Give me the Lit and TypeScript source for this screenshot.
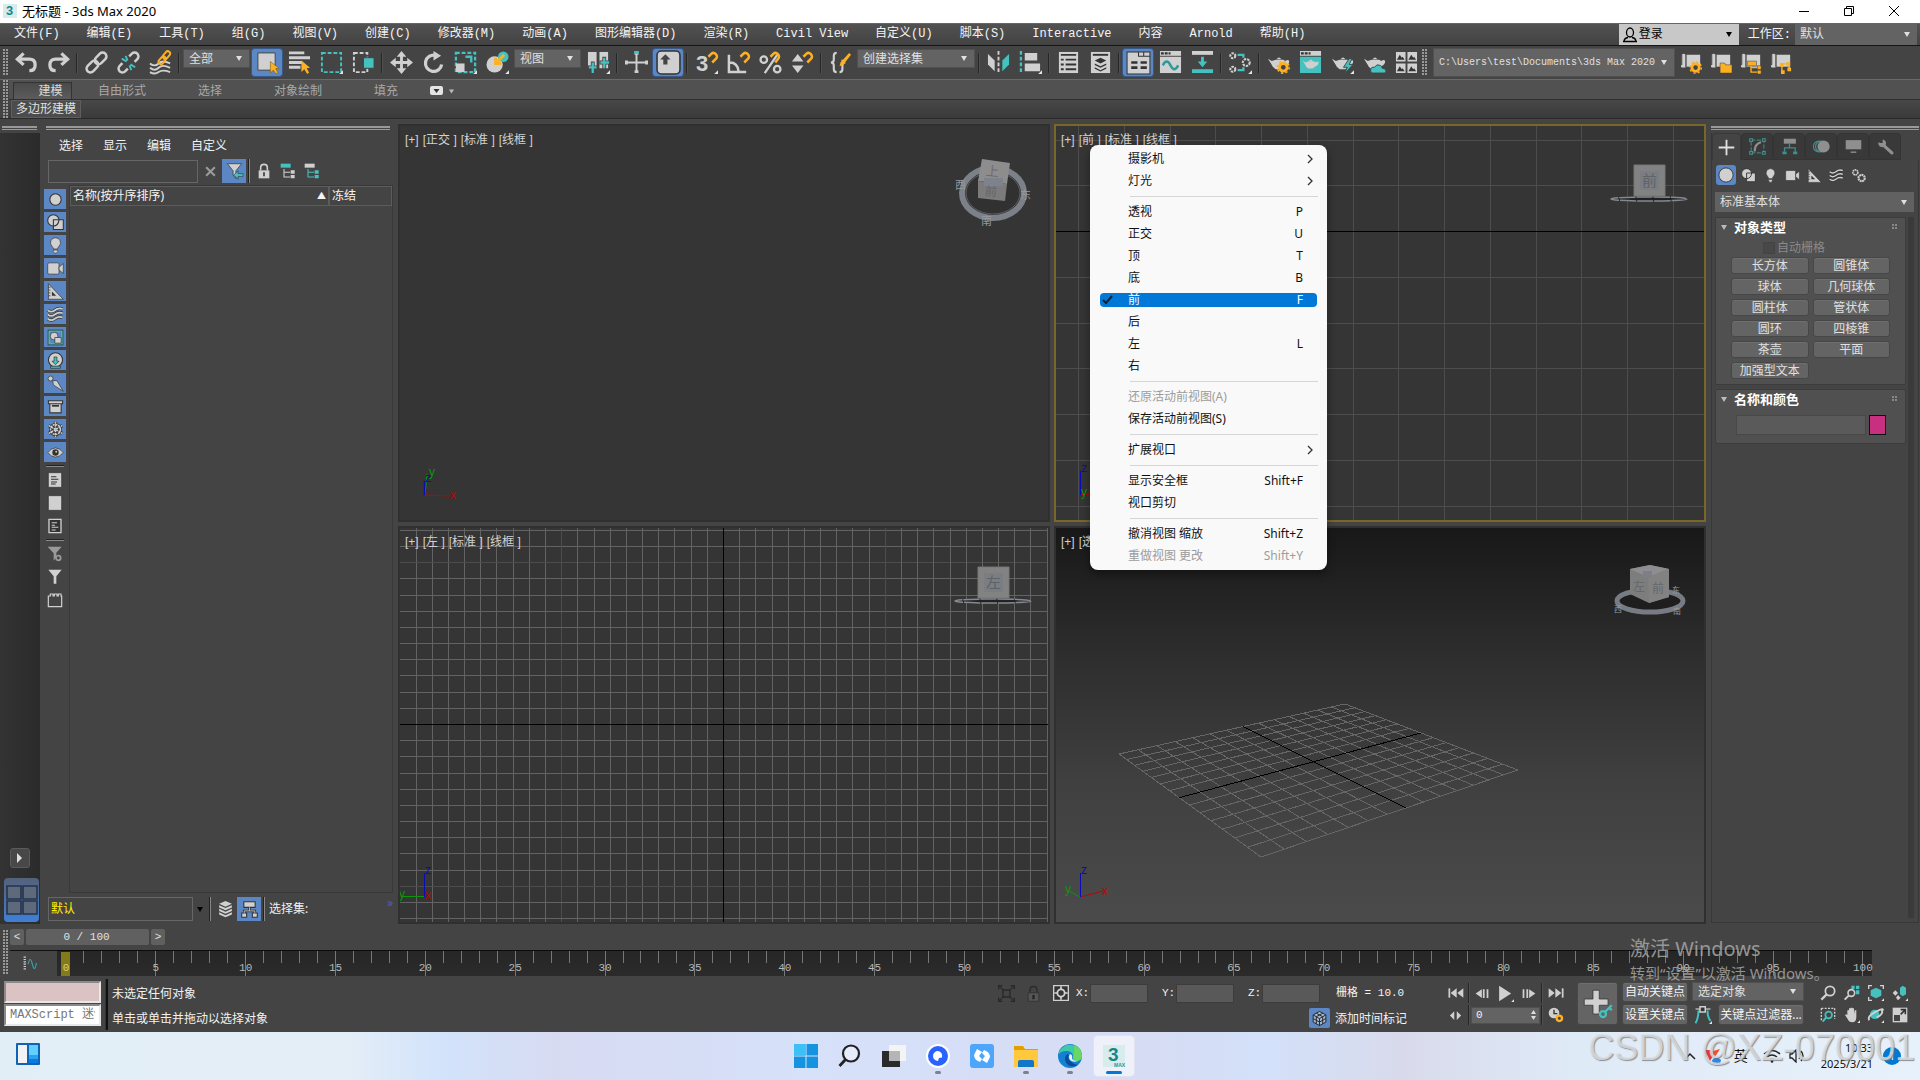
import { LitElement, html, css, svg, nothing, SVGTemplateResult } from "lit";
import { customElement, property } from "lit/decorators.js";
import { classMap } from "lit/directives/class-map.js";

const G = "#d0d0d0";
const T = "#45c1c0";
const O = "#fdb021";
const D = "#333333";

const more = svg`<path d="M24 20v4h-4z" fill="#e4e4e4"/>`;
const teapot = svg`<path d="M1 8l4 2.500 4-1.500h8l2 1.500c3-2 4.500-1 4 1.500-.6 2.500-3 3.600-5 4.500l-3 2.500h-6l-3-2.500c-1-2.500-3-5-5-8.500z" fill="${G}"/><path d="M10 8.500q2.500-3.500 5 0z" fill="${G}"/>`;
const scroll = svg`<path d="M2 3q2-2 4 0v14h-4q-2-1 0-3z" fill="${G}"/><path d="M7 3h15v13H7z" fill="${G}"/><path d="M2 14v-11M6.500 3v13" stroke="#555" fill="none"/>`;

/* All glyphs share a 24 x 24 box. */
const ICONS: Record<string, SVGTemplateResult> = {
  undo: svg`<path d="M9 2.500L2.500 8.500 9 14.500M3 8.500h12q6 0 6 6t-6 6" fill="none" stroke="${G}" stroke-width="3.400"/>`,
  redo: svg`<path d="M15 2.500l6.500 6-6.500 6M21 8.500H9q-6 0-6 6t6 6" fill="none" stroke="${G}" stroke-width="3.400"/>`,
  link: svg`<g fill="none" stroke="${G}" stroke-width="2.600" transform="rotate(-45 12 12)"><rect x="-1" y="8" width="14" height="8" rx="4"/><rect x="11" y="8" width="14" height="8" rx="4"/></g>`,
  unlink: svg`<g fill="none" stroke="${G}" stroke-width="2.600" transform="rotate(-45 12 12)"><path d="M7 8H3a4 4 0 0 0 0 8h4M17 8h4a4 4 0 0 1 0 8h-4"/></g><path d="M5 8l5 3M9 5l2 5M14 14l5 3M13 15l2 5" stroke="${T}" stroke-width="2"/>`,
  bind: svg`<path d="M1 13q5 4 9 0t12 0M1 17.500q5 4 9 0t12 0M1 22q5 3 9 0t12 0" fill="none" stroke="${G}" stroke-width="2"/><g fill="none" stroke="${O}" stroke-width="2" transform="rotate(-50 16 7)"><rect x="8" y="4.500" width="9" height="5" rx="2.500"/><rect x="15" y="4.500" width="9" height="5" rx="2.500"/></g>`,
  pick: svg`<path d="M2 2h18v18H2z" fill="${G}" stroke="#444"/><path d="M15 11v12l3-3 3 4 2-1.500-2.500-4 3.500-.5z" fill="${O}" stroke="#7a5a10" stroke-width=".6"/>`,
  pickName: svg`<path d="M1 2h16M1 7h22M1 12h14M1 17h12" stroke="${G}" stroke-width="3"/><path d="M14 10v12l3-3 3 5 2-1.500-2.500-4.500 3.500-.5z" fill="${O}"/>`,
  rect: svg`<path d="M2 2h20v20H2z" fill="none" stroke="${T}" stroke-width="2" stroke-dasharray="4 2"/>${more}`,
  cross: svg`<path d="M2 2h14v20H2z" fill="none" stroke="${G}" stroke-width="2" stroke-dasharray="4 2"/><path d="M12 7h11v11H12z" fill="${T}" stroke="#444"/>`,
  move: svg`<path d="M12 0l5 6h-3.500v4.500H18V7l6 5-6 5v-3.500h-4.500V18H17l-5 6-5-6h3.500v-4.500H6V17l-6-5 6-5v3.500h4.500V6H7z" fill="${G}"/>`,
  rotate: svg`<path d="M14 4.500A8.500 8.500 0 1 0 20.500 14" fill="none" stroke="${G}" stroke-width="3.400"/><path d="M12 0l8 5-8 5z" fill="${G}"/>`,
  scale: svg`<path d="M2 2h20v20H2z" fill="none" stroke="${T}" stroke-width="2.400" stroke-dasharray="4 2"/><path d="M2 13h9v9H2z" fill="${G}"/><path d="M12 6h6v6" fill="none" stroke="${T}" stroke-width="2.500"/>${more}`,
  place: svg`<circle cx="9" cy="14" r="8.500" fill="${G}"/><circle cx="18" cy="6" r="5.500" fill="${T}"/><path d="M19 4l-7 7M10 7v6h6" fill="none" stroke="${O}" stroke-width="3"/>${more}`,
  pivot: svg`<path d="M1 1h9v17H1z" fill="${G}"/><path d="M13 1h9v17h-9z" fill="${G}"/><path d="M6 11v13M1 17h10M18 6v13M13 12h11" stroke="#444" stroke-width="4"/><path d="M6 12v11M2 17h8M18 7v11M14 12h9" stroke="${T}" stroke-width="2.400"/>${more}`,
  manip: svg`<path d="M12 2v20M1 12h22" stroke="${G}" stroke-width="2"/><path d="M10 1h4v3h-4zM10 20h4v3h-4zM0 10h3v4H0zM21 10h3v4h-3z" fill="${G}"/><path d="M9.500 0h5v3h-5z" fill="${T}"/>`,
  override: svg`<rect x="1" y="1" width="22" height="22" rx="4" fill="${G}" stroke="#333" stroke-width="1.500"/><path d="M9 4l5 5h-3v5H7V9H4z" fill="#444"/>`,
  snap: svg`<text x="1" y="21" font-size="23" font-weight="700" font-family="Liberation Sans" fill="${G}">3</text><path d="M14 6l3-3c3-3 8 2 5 5l-4 4" fill="none" stroke="${O}" stroke-width="2.600"/>${more}`,
  angle: svg`<path d="M2 4v18h18M3 12q8 0 9 9" fill="none" stroke="${G}" stroke-width="2.600"/><path d="M14 6l3-3c3-3 8 2 5 5l-4 4" fill="none" stroke="${O}" stroke-width="2.600"/>`,
  percent: svg`<path d="M19 4L6 23" stroke="${G}" stroke-width="2.400"/><circle cx="5" cy="9" r="3.400" fill="none" stroke="${G}" stroke-width="2.400"/><circle cx="19" cy="19" r="3.400" fill="none" stroke="${G}" stroke-width="2.400"/><path d="M12 6l3-3c3-3 8 2 5 5l-3 4" fill="none" stroke="${O}" stroke-width="2.600"/>`,
  spin: svg`<path d="M1 11l6-8 6 8zM1 15h12l-6 8z" fill="${G}"/><path d="M13 6l3-3c3-3 8 2 5 5l-4 4" fill="none" stroke="${O}" stroke-width="2.600"/>`,
  braces: svg`<path d="M8 2Q5 2 5 5v4q0 3-3 3 3 0 3 3v4q0 3 3 3M11 22q3 0 3-3v-4q0-3 3-3-3 0-3-3" fill="none" stroke="${G}" stroke-width="2.200"/><path d="M21 2l-9 10-1 4 4-2 8-10z" fill="${O}"/>`,
  mirror: svg`<path d="M1 3l7 7v11l-7-7z" fill="${G}"/><path d="M23 3l-7 7v11l7-7z" fill="${T}"/><path d="M12 0v24" stroke="${G}" stroke-width="2" stroke-dasharray="4 2"/>`,
  align: svg`<path d="M2 0v24" stroke="${T}" stroke-width="2.400" stroke-dasharray="4 2"/><path d="M6 2h13v8H6zM6 13h16v8H6z" fill="${G}"/>${more}`,
  layers1: svg`<path d="M2 1h20v22H2z" fill="${G}"/><path d="M4 4h16M4 9h3M9 9h11M4 14h3M9 14h11M4 19h3M9 19h11" stroke="${D}" stroke-width="2"/>`,
  layers2: svg`<path d="M2 1h20v22H2z" fill="${G}"/><path d="M4 4h16" stroke="${D}" stroke-width="2"/><path d="M12 7l6 3-6 3-6-3zM6 13l6 3 6-3v1.500l-6 3-6-3zM6 17l6 3 6-3v1.500l-6 3-6-3z" fill="${D}"/>`,
  ribbon: svg`<path d="M1 2h22v21H1z" fill="${G}" stroke="${D}"/><path d="M12 2v4h11M17 2v4" fill="none" stroke="${D}"/><path d="M5 12h6M14 12h6M5 17h6M14 17h6" stroke="${D}" stroke-width="2.600"/>`,
  curve: svg`<path d="M1 0h22v5H1z" fill="${G}"/><path d="M2 2.500h10" stroke="${D}" stroke-width="2.500" stroke-dasharray="3 1"/><path d="M1 6h22v17H1z" fill="${G}"/><path d="M4 15q4-8 8 0t8 0" fill="none" stroke="#2a9a9a" stroke-width="2.500"/>`,
  schem: svg`<path d="M1 0h22v4H1z" fill="${G}"/><path d="M1 19h22v4H1z" fill="${T}"/><path d="M10.500 6h3v5H17l-5 6-5-6h3.500z" fill="${T}"/>`,
  material: svg`<g fill="#444" stroke="${G}" stroke-width="2.200" stroke-dasharray="2.500 1"><circle cx="4" cy="5" r="2.600"/><circle cx="4" cy="19" r="2.600"/><circle cx="18" cy="12" r="3.600"/></g><path d="M9 4h6v3M9 20h6v-3" fill="none" stroke="${T}" stroke-width="2.400"/>${more}`,
  rsetup: svg`${teapot}<circle cx="17" cy="17" r="4" fill="#444" stroke="${O}" stroke-width="3"/><circle cx="17" cy="17" r="6.200" fill="none" stroke="${O}" stroke-width="1.600" stroke-dasharray="2.400 2.400"/>`,
  rframe: svg`<path d="M1 0h22v5H1z" fill="${G}"/><path d="M2 2.500h10" stroke="${D}" stroke-width="2.500" stroke-dasharray="3 1"/><path d="M1 6h22v17H1z" fill="${T}"/><g transform="translate(3 4) scale(.75)">${teapot}</g>`,
  rprod: svg`${teapot}<path d="M19 8l-6 9h4l-3 7 9-10h-4l3-6z" fill="${T}" stroke="#444"/>${more}`,
  rcloud: svg`${teapot}<path d="M10 23q-3-1-2-4t4-2q2-4 6-2 2 1 2 3 4 0 4 3 0 2-2 2z" fill="${T}" stroke="#444"/>`,
  gallery: svg`<path d="M1 1h10v10H1zM13 1h10v10H13zM1 13h10v10H1zM13 13h10v10H13z" fill="${G}"/><path d="M2 9l3-5 2 3 1-1 2 3zM14 9l3-5 2 3 1-1 2 3zM2 21l3-5 2 3 1-1 2 3zM14 21l3-5 2 3 1-1 2 3z" fill="${D}"/>`,
  pgear: svg`${scroll}<circle cx="17" cy="17" r="4" fill="#444" stroke="${O}" stroke-width="3"/><circle cx="17" cy="17" r="6.200" fill="none" stroke="${O}" stroke-width="1.600" stroke-dasharray="2.400 2.400"/>`,
  pfolder: svg`${scroll}<path d="M11 12h5l1 2h7v9H11z" fill="${O}" stroke="#444" stroke-width=".6"/>`,
  ptree: svg`${scroll}<path d="M8 10h10v5H8zM19 15h4v4h-4zM19 20h4v4h-4z" fill="${O}" stroke="#444" stroke-width=".6"/><path d="M12 15v7h7M12 17h7" fill="none" stroke="${O}" stroke-width="1.500"/>`,
  pnodes: svg`${scroll}<path d="M11 12h4v4h-4zM18 11h4v4h-4zM12 20h4v4h-4zM19 17h4v4h-4z" fill="${O}"/><path d="M13 14v8M13 13h8v6" fill="none" stroke="${O}" stroke-width="1.500"/>`,
  circle: svg`<circle cx="12" cy="12" r="8" fill="${G}" stroke="${D}" stroke-width="1.500"/>`,
  sphere: svg`<circle cx="12" cy="12" r="9.500" fill="${G}" stroke="${D}" stroke-width="1.200"/>`,
  shapes: svg`<circle cx="9" cy="9" r="8" fill="${G}" stroke="${D}" stroke-width="1.500"/><path d="M9 8h14v14H9z" fill="${G}" stroke="${D}" stroke-width="1.500"/><path d="M9 17q7 0 8-9" fill="none" stroke="${D}" stroke-width="1.500"/>`,
  bulb: svg`<path d="M12 1a7 7 0 0 1 5 12q-2 2-2 4H9q0-2-2-4a7 7 0 0 1 5-12z" fill="${G}" stroke="${D}"/><path d="M9 18.500h6v2l-2 2.500h-2l-2-2.500z" fill="${G}" stroke="${D}" stroke-width=".8"/>`,
  camera: svg`<rect x="1" y="4" width="16" height="16" rx="2" fill="${G}" stroke="${D}"/><path d="M17 10l6-5v14l-6-5z" fill="${G}" stroke="${D}"/>`,
  helper: svg`<path d="M2 1v22h21z" fill="${G}" stroke="${D}"/><path d="M7 12v6h6z" fill="${D}"/><path d="M2 6h3M2 10h3M2 14h3M2 18h3" stroke="${D}"/>`,
  waves: svg`<path d="M1 6q5 4 10 0t11-2M1 12q5 4 10 0t11-2M1 18q5 4 10 0t11-2" fill="none" stroke="${D}" stroke-width="4.600"/><path d="M1 6q5 4 10 0t11-2M1 12q5 4 10 0t11-2M1 18q5 4 10 0t11-2" fill="none" stroke="${G}" stroke-width="2.400"/>`,
  group: svg`<path d="M1 1h22v22H1z" fill="${D}"/><path d="M3 3h18v18H3z" fill="#5b87c4" stroke="${T}" stroke-width="2"/><circle cx="10" cy="10" r="5.500" fill="${G}" stroke="${D}"/><path d="M11 12h9v8h-9z" fill="${G}" stroke="${D}"/>`,
  xref: svg`<circle cx="12" cy="11" r="10" fill="${G}" stroke="${D}" stroke-width="1.500"/><path d="M10 7h4v6h3l-5 5-5-5h3z" fill="${T}" stroke="${D}"/><path d="M5 20h14v3H5z" fill="${T}" stroke="${D}"/>`,
  bone: svg`<circle cx="5" cy="5" r="3.500" fill="${G}" stroke="${D}"/><path d="M8 8l6 0 9 15L9 14z" fill="${G}" stroke="${D}"/>`,
  box: svg`<path d="M2 4h20v4H2zM4 8h16v13H4z" fill="${G}" stroke="${D}" stroke-width="1.500"/><path d="M7 11h10" stroke="${D}" stroke-width="2.500"/>`,
  snow: svg`<g stroke="${D}" stroke-width="4.500" fill="none"><path d="M12 1v22M2.500 6.500l19 11M2.500 17.500l19-11"/><circle cx="12" cy="12" r="7"/></g><g stroke="${G}" stroke-width="2.200" fill="none" stroke-dasharray="3 1"><path d="M12 1v22M2.500 6.500l19 11M2.500 17.500l19-11"/><circle cx="12" cy="12" r="7"/></g>`,
  eye: svg`<path d="M1 12q11-13 22 0-11 13-22 0z" fill="${G}" stroke="${D}"/><circle cx="12" cy="12" r="4.500" fill="${D}"/><circle cx="13" cy="11" r="1.300" fill="${G}"/>`,
  doc: svg`<path d="M2 1h20v22H2z" fill="${G}" stroke="#2c2c2c"/><path d="M6 7h8M6 11h11M6 15h9M6 18h7" stroke="${D}" stroke-width="1.600"/>`,
  blank: svg`<path d="M2 1h20v22H2z" fill="${G}" stroke="#2c2c2c"/>`,
  docd: svg`<path d="M3 2h18v20H3z" fill="#333" stroke="${G}" stroke-width="2"/><path d="M7 7h8M7 11h5M7 14h10M7 18h6" stroke="${G}" stroke-width="1.600"/>`,
  funnelGear: svg`<path d="M1 1h21l-8 9v6l-4 6V11z" fill="#9a9a9a"/><circle cx="17" cy="18" r="3.500" fill="#444" stroke="#9a9a9a" stroke-width="2.600"/>`,
  funnel: svg`<path d="M2 1h20l-8 10v11h-4V11z" fill="${G}"/>`,
  brick: svg`<path d="M2 6h3V3h4v3h2V3h4v3h2V3h4v3h1v16H2z" fill="none" stroke="${G}" stroke-width="1.800"/>`,
  funnelArrow: svg`<path d="M2 1h20l-8 10v11l-4-5v-6z" fill="${G}" stroke="#333"/><path d="M24 15h-7v-4l-6 6 6 6v-4h7z" fill="${T}" stroke="#333" stroke-width=".8"/>`,
  xmark: svg`<path d="M4 4l16 16M20 4L4 20" stroke="#9a9a9a" stroke-width="4"/>`,
  lock: svg`<path d="M7 11V7q0-5 5-5t5 5v4" fill="none" stroke="${G}" stroke-width="2.400"/><path d="M4 11h16v12H4z" fill="${G}"/><path d="M12 14v6" stroke="#333" stroke-width="2.400"/>`,
  lockDim: svg`<path d="M7 11V7q0-5 5-5t5 5v4" fill="none" stroke="#2c2c2c" stroke-width="2"/><path d="M4.500 11h15v12h-15z" fill="#555" stroke="#2c2c2c"/><path d="M12 14v6" stroke="#222" stroke-width="3"/>`,
  tree1: svg`<path d="M1 1h15v6H1z" fill="${T}"/><path d="M6 9v12h9M6 14h9" fill="none" stroke="${G}" stroke-width="1.600"/><path d="M16 11h6v5h-6zM16 18h6v5h-6z" fill="${G}"/>`,
  tree2: svg`<path d="M1 1h15v6H1z" fill="${G}"/><path d="M6 9v12h9M6 14h9" fill="none" stroke="${T}" stroke-width="1.600"/><path d="M16 11h6v5h-6zM16 18h6v5h-6z" fill="${T}"/>`,
  stack: svg`<path d="M12 0l9 4-9 4-9-4z" fill="${G}"/><path d="M3 6l9 4 9-4v3l-9 4-9-4zM3 11l9 4 9-4v3l-9 4-9-4zM3 16l9 4 9-4v3l-9 4-9-4z" fill="${G}"/>`,
  hier: svg`<path d="M12 9v5M4.500 17v-3h15v3" fill="none" stroke="${D}" stroke-width="3.500"/><path d="M4 1h16v8H4zM1 17h7v6H1zM16 17h7v6h-7z" fill="${G}" stroke="${D}" stroke-width="1.500"/><path d="M12 9v5M4.500 17v-3h15v3" fill="none" stroke="${G}" stroke-width="1.200"/>`,
  plus: svg`<path d="M12 1v22M1 12h22" stroke="#e0e0e0" stroke-width="2.600"/>`,
  modify: svg`<path d="M3 3h18v18H3z" fill="none" stroke="#3f8f8f" stroke-width="1.400" stroke-dasharray="6 2"/><path d="M1 1h4v4H1zM19 1h4v4h-4zM1 19h4v4H1zM19 19h4v4h-4z" fill="#444" stroke="#3f8f8f" stroke-width="1.500"/><path d="M8 19q0-11 9-13" fill="none" stroke="#8f8f8f" stroke-width="3"/>`,
  hierTab: svg`<path d="M4 1h17v7H4z" fill="#8f8f8f"/><path d="M12 8v6M5 19v-5h15v5" fill="none" stroke="#3f8f8f" stroke-width="1.800"/><path d="M2 19h6v4H2zM17 19h6v4h-6z" fill="#3f8f8f"/>`,
  motion: svg`<circle cx="8" cy="12" r="7.500" fill="none" stroke="#3f8f8f" stroke-width="1.600"/><circle cx="11" cy="12" r="7.500" fill="#444" stroke="#3f8f8f" stroke-width="1.600"/><circle cx="15" cy="12" r="8.500" fill="#8f8f8f"/>`,
  display: svg`<path d="M1 3h22v13H1z" fill="#8f8f8f"/><path d="M8 20h8" stroke="#8f8f8f" stroke-width="2"/>`,
  wrench: svg`<path d="M9 10l12 11" stroke="#8f8f8f" stroke-width="4.600" stroke-linecap="round"/><path d="M2 6a5.500 5.500 0 1 0 6-4v5H5z" fill="#8f8f8f"/>`,
  gears: svg`<circle cx="7" cy="7" r="4" fill="none" stroke="${G}" stroke-width="2.600" stroke-dasharray="2.600 .8"/><circle cx="17" cy="16" r="5" fill="none" stroke="${G}" stroke-width="3.400" stroke-dasharray="3 .8"/>`,
  trackIcon: svg`<path d="M3 1v22" stroke="${G}" stroke-width="4" stroke-dasharray="2 2"/><path d="M9 14q3-16 7 0t7-2" fill="none" stroke="#3fa0a0" stroke-width="2"/>`,
  isolate: svg`<path d="M1 6V1h5M18 1h5v5M23 18v5h-5M6 23H1v-5M7 7h10v10H7z" fill="none" stroke="#282828" stroke-width="2"/><path d="M3 3l4 4M21 3l-4 4M3 21l4-4M21 21l-4-4" stroke="#282828" stroke-width="1.500"/>`,
  absolute: svg`<path d="M1 1h22v22H1z" fill="${D}" stroke="${G}" stroke-width="2"/><path d="M12 2v20M2 12h20" stroke="${G}" stroke-width="2.600"/><circle cx="12" cy="12" r="5.500" fill="${D}" stroke="${G}" stroke-width="2.800"/>`,
  cube: svg`<path d="M12 2l9 5v10l-9 5-9-5V7z" fill="#c8cdd6aa"/><path d="M12 2l9 5v10l-9 5-9-5V7zM3 7l9 5 9-5M12 12v10M7.500 4.500l9 5v10M16.500 4.500l-9 5v10M3 12l9 5 9-5" fill="none" stroke="#2a2a2a" stroke-width="1.400"/>`,
  first: svg`<path d="M2 5v14" stroke="${G}" stroke-width="2.600"/><path d="M13 5v14l-9-7zM23 5v14l-9-7z" fill="${G}"/>`,
  prev: svg`<path d="M11 5v14L1 12z" fill="${G}"/><path d="M14 5v14M20 5v14" stroke="${G}" stroke-width="2.800"/>`,
  play: svg`<path d="M3 1l17 11L3 23z" fill="${G}"/>${more}`,
  next: svg`<path d="M13 5v14l10-7z" fill="${G}"/><path d="M4 5v14M10 5v14" stroke="${G}" stroke-width="2.800"/>`,
  last: svg`<path d="M22 5v14" stroke="${G}" stroke-width="2.600"/><path d="M1 5v14l9-7zM11 5v14l9-7z" fill="${G}"/>`,
  keys: svg`<path d="M10 5v14l-7-7zM14 5v14l7-7z" fill="${G}"/>`,
  clock: svg`<circle cx="9" cy="9" r="8" fill="${G}"/><path d="M9 4v6h5" fill="none" stroke="#333" stroke-width="2"/><circle cx="17" cy="17" r="4" fill="#444" stroke="${O}" stroke-width="3.500"/>`,
  bigKey: svg`<path d="M8 1h5v7h7v5h-7v7H8v-7H1V8h7z" fill="${G}" stroke="#333" stroke-width=".6"/><path d="M23 13l-6 6M21 15l2 2" stroke="${T}" stroke-width="1.800"/><circle cx="16" cy="20" r="2.400" fill="none" stroke="${T}" stroke-width="1.800"/>`,
  tangent: svg`<path d="M2 23Q6 16 6 6M22 20q-4-5-4-14" fill="none" stroke="${T}" stroke-width="2.600"/><path d="M2 4h20" stroke="${G}" stroke-width="1.500"/><path d="M8 1h7v7H8z" fill="#333" stroke="${G}" stroke-width="2"/>${more}`,
  zoom: svg`<circle cx="15" cy="9" r="7" fill="none" stroke="${G}" stroke-width="2.600"/><path d="M10 14l-8 8" stroke="${G}" stroke-width="3.400"/>`,
  zoomAll: svg`<path d="M11 1h5v5h-5zM18 1h5v5h-5zM18 8h5v6h-5z" fill="${T}"/><circle cx="11" cy="12" r="5" fill="#444" stroke="${G}" stroke-width="2.400"/><path d="M7 16l-6 6" stroke="${G}" stroke-width="3"/>`,
  extents: svg`<path d="M1 6V1h5M18 1h5v5M6 23H1v-5" fill="none" stroke="${G}" stroke-width="2"/><path d="M12 4l8 4v8l-8 4-8-4V8z" fill="${T}"/>${more}`,
  extentsAll: svg`<path d="M12 4l4-3 5 3v10l-5 3-4-3z" fill="${T}"/><path d="M5 8l4 4-4 4-4-4zM9 15l4 4-4 4-3-4z" fill="${G}"/>${more}`,
  region: svg`<path d="M2 2h20v16" fill="none" stroke="${G}" stroke-width="2" stroke-dasharray="3 2"/><path d="M2 2v18" stroke="${G}" stroke-width="2" stroke-dasharray="3 2"/><circle cx="13" cy="12" r="5" fill="#444" stroke="${T}" stroke-width="2.600"/><path d="M9 16l-5 6" stroke="${T}" stroke-width="3"/>`,
  hand: svg`<path d="M5 12V5h2.500v6V2H10v8V1h2.600v9V2H15v9l1-6h2.500v10q0 8-6 8-5 0-7-5l-4-6 2-1z" fill="${G}"/>${more}`,
  orbit: svg`<circle cx="10" cy="11" r="7" fill="${T}"/><path d="M2 20Q-2 14 12 7T21 6q2 4-8 10" fill="none" stroke="${G}" stroke-width="2.800"/>${more}`,
  maximize: svg`<path d="M1 1h22v22H1z" fill="${G}"/><path d="M3 12h9v9H3z" fill="#444"/><path d="M13 11l6-6M13 4h7v7" fill="none" stroke="#333" stroke-width="2.400"/>`,
};

const icon = (name: string, size = 24) =>
  html`<svg class="ic" viewBox="0 0 24 24" width=${size} height=${size} aria-hidden="true">${ICONS[name]}</svg>`;

const shared = css`
  * { box-sizing: border-box; }
  button, input, select {
    font: inherit; color: inherit; background: none; border: 0; padding: 0; margin: 0; border-radius: 0; outline: 0; min-width: 0;
  }
  button { display: inline-flex; align-items: center; justify-content: center; white-space: nowrap; }
  .ic { display: block; flex: none; overflow: visible; }
`;

type Pt = [number, number];

/* Projects the unit square onto an arbitrary quad (a, b, c, d clockwise). */
function quadMap(a: Pt, b: Pt, c: Pt, d: Pt) {
  const sx = a[0] - b[0] + c[0] - d[0];
  const sy = a[1] - b[1] + c[1] - d[1];
  const dx1 = b[0] - c[0], dx2 = d[0] - c[0], dy1 = b[1] - c[1], dy2 = d[1] - c[1];
  const den = dx1 * dy2 - dx2 * dy1;
  const g = (sx * dy2 - dx2 * sy) / den;
  const h = (dx1 * sy - sx * dy1) / den;
  return (u: number, v: number): Pt => {
    const w = g * u + h * v + 1;
    return [
      ((b[0] - a[0] + g * b[0]) * u + (d[0] - a[0] + h * d[0]) * v + a[0]) / w,
      ((b[1] - a[1] + g * b[1]) * u + (d[1] - a[1] + h * d[1]) * v + a[1]) / w,
    ];
  };
}

const line = (p: Pt, q: Pt, cls: string) =>
  svg`<line class=${cls} x1=${p[0]} y1=${p[1]} x2=${q[0]} y2=${q[1]}></line>`;

@customElement("max-viewport")
class MaxViewport extends LitElement {
  @property() view = "";
  @property() kind: "ortho" | "front" | "left" | "persp" = "ortho";

  static styles = [shared, css`
    :host { display: grid; min-width: 0; min-height: 0; border: 2px solid #303030; background: #353535; overflow: hidden; }
    :host([kind="front"]) { border-color: #7a6628; }
    :host([kind="persp"]) { background: linear-gradient(#181818, #2c2c2c 30%, #404040 65%, #4b4b4b); }
    .scene, .bar, .cube, .axes { grid-area: 1 / 1; }
    .scene { width: 100%; height: 100%; min-height: 0; display: block; }
    .minor { stroke: #636363; } .dim { stroke: #4d4d4d; } .axis { stroke: #000; }
    .mesh { stroke: #666; }
    .bar { display: flex; gap: 4px; align-self: start; padding: 7px 5px; font: 12px/14px "Liberation Sans", "Noto Sans CJK SC", sans-serif; color: #d2d2d2; }
    .cube { justify-self: end; align-self: start; margin: 24px 8px 0 0; overflow: visible; }
    .axes { justify-self: start; align-self: end; overflow: visible; margin: 0 0 -2px -2px; }
    text { font-family: "Liberation Sans", "Noto Sans CJK SC", sans-serif; }
  `];

  private flat(step: number, cx: number, cy: number, cls: string, upright: string) {
    const out: unknown[] = [];
    for (let i = -60; i <= 60; i++) {
      const x = Math.round(cx + i * step) + 0.5;
      const y = Math.round(cy + i * step) + 0.5;
      const c = Math.abs(i) === 10 ? "dim" : cls;
      if (i === 0) continue;
      if (x > 0) out.push(svg`<line class=${c} x1=${x} x2=${x} y1="0" y2="100%"></line>`);
      if (y > 0) out.push(svg`<line class=${c} y1=${y} y2=${y} x1="0" x2="100%"></line>`);
    }
    out.push(svg`<line class=${upright} x1=${cx + 0.5} x2=${cx + 0.5} y1="0" y2="100%"></line>`);
    out.push(svg`<line class="axis" y1=${cy + 0.5} y2=${cy + 0.5} x1="0" x2="100%"></line>`);
    return out;
  }

  private mesh() {
    const f = quadMap([63, 226], [289, 176], [462, 242], [205, 329]);
    const out: unknown[] = [];
    for (let i = 0; i <= 14; i++) {
      if (i === 7) continue;
      out.push(line(f(i / 14, 0), f(i / 14, 1), "mesh"), line(f(0, i / 14), f(1, i / 14), "mesh"));
    }
    out.push(line(f(0.5, 0), f(0.5, 1), "axis"), line(f(0, 0.5), f(1, 0.5), "axis"));
    return out;
  }

  private cubeArt() {
    if (this.kind === "ortho") return svg`
      <ellipse cx="43" cy="43" rx="31" ry="25" fill="#2f2f2f" fill-opacity=".6" stroke="#7c8088" stroke-width="6"/>
      <ellipse cx="43" cy="43" rx="27" ry="21" fill="none" stroke="#5c5f66"/>
      <path d="M32 9l28 4-3 21-29-3z" fill="#8d8d8d"/><path d="M28 31l29 3-2 17-27-3z" fill="#7b7b7b"/>
      <path d="M34 28h19v8H34z" fill="#7d828c"/>
      <text x="36" y="26" font-size="13" fill="#6c6c70" transform="rotate(6 43 20)">上</text>
      <text x="35" y="46" font-size="12" fill="#63666c" transform="rotate(6 42 42)">前</text>
      <g fill="#97999d" font-size="11"><text x="5" y="39">西</text><text x="70" y="49">东</text><text x="31" y="75">南</text></g>`;
    if (this.kind === "persp") return svg`
      <ellipse cx="44" cy="49" rx="33" ry="11" fill="#1e1e1e" stroke="#777b83" stroke-width="5"/>
      <path d="M44 13l19 4v28l-20 6-19-9V17z" fill="#7d7d7d"/>
      <path d="M44 13l19 4-21 8-18-8z" fill="#8e8e8e"/><path d="M42 25l21-8v28l-20 6z" fill="#828282"/>
      <path d="M37 19h9v7h-9z" fill="#7b8088"/>
      <text x="27" y="39" font-size="12" fill="#66686d">左</text><text x="46" y="41" font-size="12" fill="#66686d">前</text>
      <g fill="#999b9f" font-size="8"><text x="8" y="60">西</text><text x="67" y="62">南</text><text x="66" y="41">东</text></g>`;
    return svg`
      <ellipse cx="43" cy="49" rx="38" ry="2" fill="#222" stroke="#858a92" stroke-width="1.500" stroke-dasharray="16 1"/>
      <path d="M28 15h31v31H28z" fill="#828282" stroke="#777"/>
      <path d="M34 21h19v19H34z" fill="#7a7d82"/>
      <text x="36" y="36" font-size="15" fill="#5f6268">${this.kind === "left" ? "左" : "前"}</text>`;
  }

  private axesArt() {
    const label = (x: number, y: number, c: string, s: string) => svg`<text x=${x} y=${y} fill=${c} font-size="12">${s}</text>`;
    const B = "#0b0bb8", R = "#b30808", N = "#0a960a";
    if (this.kind === "ortho") return svg`<path d="M27 53l2-21" stroke=${N}/><path d="M26.500 53V39" stroke=${B} stroke-width="1.500"/><path d="M27 53l25 1" stroke=${R}/>${label(31, 34, N, "y")}${label(27, 40, B, "z")}${label(52, 57, R, "x")}`;
    if (this.kind === "left") return svg`<path d="M4 52.500h22" stroke=${N}/><path d="M26.500 53V29" stroke=${B}/>${label(1, 54, N, "y")}${label(27, 30, B, "z")}${label(27, 55, R, "x")}`;
    if (this.kind === "front") return svg`<path d="M27 52.500h24" stroke=${R}/><path d="M26.500 53V29" stroke=${B}/>${label(27, 54, N, "y")}${label(27, 30, B, "z")}${label(52, 55, R, "x")}`;
    return svg`<path d="M26 53l23-6" stroke=${R}/><path d="M26 53l-11-6" stroke=${N}/><path d="M26.500 53V29" stroke=${B}/>${label(11, 49, N, "y")}${label(27, 30, B, "z")}${label(48, 51, R, "x")}`;
  }

  render() {
    return html`
      <svg class="scene" shape-rendering="crispEdges" aria-hidden="true">
        ${this.kind === "left" ? this.flat(16.18, 323, 196, "minor", "axis") : nothing}
        ${this.kind === "front" ? this.flat(45.75, 205, 105, "dim", "dim") : nothing}
        ${this.kind === "persp" ? this.mesh() : nothing}
      </svg>
      <div class="bar"><button>[+]</button><button>[${this.view} ]</button><button>[标准 ]</button><button>[线框 ]</button></div>
      <svg class="cube" width="90" height="90" aria-hidden="true">${this.cubeArt()}</svg>
      <svg class="axes" width="80" height="80" aria-hidden="true">${this.axesArt()}</svg>`;
  }
}

type MenuRow = { text: string; key?: string; sub?: boolean; off?: boolean; on?: boolean } | null;
const CONTEXT: MenuRow[] = [
  { text: "摄影机", sub: true }, { text: "灯光", sub: true }, null,
  { text: "透视", key: "P" }, { text: "正交", key: "U" }, { text: "顶", key: "T" }, { text: "底", key: "B" },
  { text: "前", key: "F", on: true }, { text: "后" }, { text: "左", key: "L" }, { text: "右" }, null,
  { text: "还原活动前视图(A)", off: true }, { text: "保存活动前视图(S)" }, null,
  { text: "扩展视口", sub: true }, null,
  { text: "显示安全框", key: "Shift+F" }, { text: "视口剪切" }, null,
  { text: "撤消视图 缩放", key: "Shift+Z" }, { text: "重做视图 更改", key: "Shift+Y", off: true },
];

const MENUS = ["文件(F)", "编辑(E)", "工具(T)", "组(G)", "视图(V)", "创建(C)", "修改器(M)", "动画(A)", "图形编辑器(D)", "渲染(R)", "Civil View", "自定义(U)", "脚本(S)", "Interactive", "内容", "Arnold", "帮助(H)"];

/* "|" is a separator, "#" a drop-down, "*" a pressed button. */
const TOOLS = [
  "undo", "redo", "|", "link", "unlink", "bind", "|", "#全部", "*pick", "pickName", "rect", "cross", "|",
  "move", "rotate", "scale", "place", "#视图", "pivot", "|", "manip", "*override", "|",
  "snap", "angle", "percent", "spin", "|", "braces", "#创建选择集", "|", "mirror", "align", "|",
  "layers1", "layers2", "|", "*ribbon", "curve", "schem", "|", "material", "|",
  "rsetup", "rframe", "rprod", "rcloud", "gallery",
];

const SIDE = ["circle", "shapes", "bulb", "camera", "helper", "waves", "group", "xref", "bone", "box", "snow", "eye"];
const PRIMS = ["长方体", "圆锥体", "球体", "几何球体", "圆柱体", "管状体", "圆环", "四棱锥", "茶壶", "平面", "加强型文本"];

const TASKS: [string, SVGTemplateResult, string][] = [
  ["开始", svg`<path d="M0 0h11.500v11.500H0zM12.500 0H24v11.500H12.500zM0 12.500h11.500V24H0zM12.500 12.500H24V24H12.500z" fill="#1494e0"/><path d="M0 0h11.500v11.500H0z" fill="#3cc0f5"/>`, ""],
  ["搜索", svg`<circle cx="13" cy="9.500" r="8" fill="#fff6" stroke="#222" stroke-width="2.200"/><path d="M7.500 15.500L1.500 22" stroke="#222" stroke-width="2.800"/>`, ""],
  ["任务视图", svg`<path d="M0 7h18v16H0z" fill="#2b2b2b"/><path d="M7 1h17v16H7z" fill="#f4f4f4"/><path d="M7 7h11v10H7z" fill="#b5b5b5"/>`, ""],
  ["浏览器", svg`<circle cx="12" cy="12" r="12" fill="#fff"/><circle cx="12" cy="12" r="10" fill="#2962ff"/><path d="M12 7a5 5 0 1 0 0 10l1-3 3-.5A5 5 0 0 0 12 7z" fill="#fff"/>`, "run"],
  ["助手", svg`<rect width="24" height="24" rx="3" fill="#4da6fb"/><path d="M7 5l5 3-3 4 3 3-2 3q-6-2-6-7zM17 19l-5-3 3-4-3-3 2-3q6 2 6 7z" fill="#fff"/>`, ""],
  ["文件资源管理器", svg`<path d="M0 2h9l2 3h13v17H0z" fill="#e0a000"/><path d="M0 6h24v17H0z" fill="#ffc83d"/><path d="M4 23v-5q0-2 2-2h12q2 0 2 2v5z" fill="#1277c8"/>`, "run"],
  ["Edge", svg`<circle cx="12" cy="12" r="12" fill="#1380d0"/><path d="M1 8a12 12 0 0 1 23 4q0 5-6 5-4 0-3-3 1-7-7-7-5 0-7 3z" fill="#3ec9a8"/><path d="M16 1a12 12 0 0 1 8 11q0 4-5 5l-4-2q2-8 1-14z" fill="#68d860"/><path d="M9 10q-4 5 0 10 4 4 11 1-5-1-8-4t-1-6z" fill="#0c4a9c"/><path d="M12 10q3 1 2 4 0 3 6 3-5 2-8-1-2-3 0-6z" fill="#e8f2fb"/>`, "run"],
  ["3ds Max", svg`<path d="M1 1h22v22H1z" fill="#d8ecec"/><text x="6" y="17" font-size="19" font-weight="700" font-family="Liberation Sans" fill="#12888c">3</text><text x="12" y="23" font-size="5" font-weight="700" font-family="Liberation Sans" fill="#12a0a0">MAX</text>`, "cur"],
];

@customElement("app-root")
class AppRoot extends LitElement {
  static styles = [shared, css`
    :host {
      display: flex; flex-direction: column; min-height: 100vh; position: relative; overflow: hidden;
      background: #444; color: #e0e0e0; --mono: "Liberation Mono", "Noto Sans CJK SC", monospace;
      font: 12px/16px "Noto Sans", "Noto Sans CJK SC", sans-serif;
    }
    .title { height: 23px; background: #fff; color: #000; display: flex; align-items: center; padding: 0 4px 2px 3px; gap: 5px; font-size: 13px; line-height: 18px; }
    .title h1 { font: inherit; margin: 0; flex: 1; }
    .title .wins { display: flex; }
    .title .wins button { width: 45px; height: 19px; }
    .menubar { height: 23px; display: flex; align-items: stretch; background: linear-gradient(#525252, #424242); border-top: 1px solid #666; border-bottom: 1px solid #161616; font: 12px/16px var(--mono); color: #f4f4f4; }
    .menus { display: flex; flex: 1; gap: 27px; padding: 0 14px 2px; }
    .drop { display: inline-grid; align-items: center; background: #636363; color: #e0e0e0; }
    .drop > select { grid-area: 1 / 1; appearance: none; width: 100%; height: 100%; padding: 0 18px 0 5px; text-overflow: ellipsis; }
    .drop::after { content: ""; grid-area: 1 / 1; justify-self: end; margin-right: 7px; border: 3px solid transparent; border-top: 5px solid currentColor; border-bottom: 0; pointer-events: none; }
    .login { width: 120px; background: #c8c8c8; color: #000; grid-template-columns: 20px 1fr; }
    .login > select, .login::after { grid-area: 1 / 2; }
    .login > select { padding-left: 0; }
    .login svg { margin-left: 4px; }
    .wslabel { padding: 3px 4px 0 9px; }
    .ws { width: 122px; margin-right: 3px; }
    .toolbar { height: 33px; display: flex; align-items: center; padding-left: 3px; }
    .tool { width: 32px; height: 29px; flex: none; }
    .tool.on { background: #5b87c4; border: 1px solid #39588a; border-radius: 3px; background-clip: padding-box; }
    .sep { width: 2px; height: 20px; margin: 0 2px; background: #262626; border-right: 1px solid #505050; flex: none; }
    .grip { width: 5px; margin-right: 2px; align-self: stretch; background: radial-gradient(circle at 1px 1px, #999 1px, transparent 1px) 0 0 / 3px 3px; }
    .toolbar .grip { height: 27px; align-self: center; }
    .toolbar .drop { height: 19px; width: 67px; margin: 0 1px 8px; border: 1px solid #505050; flex: none; }
    .toolbar .drop.wide { width: 118px; }
    .toolbar .path { width: 242px; height: 29px; margin: 0 1px 0 4px; font: 10px/14px var(--mono); }
    .small { width: 30px; height: 29px; }
    .ribbon { display: grid; grid-template-columns: 6px 1fr; padding-left: 3px; border-top: 1px solid #6a6a6a; height: 40px; border-bottom: 1px solid #2a2a2a; }
    .rtabs { height: 20px; display: flex; align-items: end; background: #515151; color: #a8a8a8; border-bottom: 1px solid #2e2e2e; }
    .rtabs button { height: 17px; }
    .rtabs .cur { width: 59px; margin: 0 26px 0 4px; padding-left: 16px; background: linear-gradient(#4a4a4a, #5c5c5c); border: 1px solid #333; border-bottom: 0; color: #d8d8d8; }
    .rtabs .gap { margin-left: 52px; }
    .rtabs .opts { margin-left: 32px; }
    .rpanel { height: 18px; padding: 0 2px; background: linear-gradient(#484848, #3a3a3a); }
    .rpanel button { width: 70px; height: 18px; background: #4c4c4c; border: 1px solid #5e5e5e; }
    main { flex: 1; display: grid; grid-template-columns: 40px 358px 1fr 214px; min-height: 0; position: relative; }
    .hgrip { height: 4px; margin-bottom: 3px; background: radial-gradient(circle at 1px 1px, #999 1px, transparent 1px) 0 0 / 2px 3px; }
    .strip { padding-top: 7px; display: flex; flex-direction: column; }
    .strip .hgrip { margin: 0 3px 3px 2px; }
    .dark { flex: 1; background: linear-gradient(90deg, #333, #2b2b2b); display: flex; flex-direction: column; justify-content: end; align-items: center; gap: 10px; padding-bottom: 2px; }
    .dark .exp { width: 20px; height: 20px; background: #484848; border: 1px solid #5a5a5a; border-radius: 3px; }
    .dark .lay { width: 35px; height: 44px; align-self: end; margin-right: 1px; border-radius: 4px; background: linear-gradient(#55617a, #3f7fd8); }
    .explorer { display: flex; flex-direction: column; padding: 7px 5px 1px 4px; min-height: 0; }
    .explorer .hgrip { margin: 0 3px 3px 2px; }
    .emenu { display: flex; gap: 20px; padding: 5px 15px 5px; height: 26px; color: #f2f2f2; }
    .esearch { display: flex; align-items: center; padding-left: 4px; height: 24px; }
    .esearch input { width: 150px; height: 23px; border: 1px solid #666; }
    .hot { width: 24px; height: 24px; background: #5b87c4; }
    .esearch .x { width: 24px; height: 24px; }
    .esearch .i { width: 24px; height: 24px; }
    .vsep { width: 2px; height: 24px; background: #222; border-right: 1px solid #888; margin: 0 2px; }
    .ebody { flex: 1; display: grid; grid-template-columns: 22px 1fr; gap: 3px; margin-top: 2px; min-height: 0; }
    .side { display: flex; flex-direction: column; gap: 3px; padding-top: 4px; }
    .side button { width: 22px; height: 20px; }
    .side .on { background: #5b87c4; }
    .side hr { width: 18px; height: 2px; border: 0; border-top: 1px solid #222; background: #888; margin: 0 2px; }
    .list { border: 1px solid #393939; }
    .list table { width: 100%; border-collapse: separate; border-spacing: 0; table-layout: fixed; }
    .list th { height: 20px; font-weight: 400; text-align: left; padding: 0 2px; border: 1px solid #5c5c5c; color: #f4f4f4; line-height: 16px; }
    .list th.fz { width: 63px; }
    .list th span { float: right; font-size: 9px; }
    .efoot { display: flex; align-items: center; height: 30px; padding: 2px 0 0 4px; }
    .efoot .drop { width: 159px; height: 24px; background: none; color: #ffee00; grid-template-columns: 145px 14px; }
    .efoot .drop > select { border: 1px solid #666; padding: 0 0 0 2px; }
    .efoot .drop::after { grid-area: 1 / 2; margin-right: 4px; border-top-color: #000; }
    .efoot .i { width: 24px; height: 24px; }
    .efoot .chev { margin-left: auto; align-self: start; color: #5a5ab0; }
    .efoot .txt { margin-left: 2px; color: #f0f0f0; }
    .views { display: grid; grid-template: 1fr 1fr / 1fr 1fr; gap: 4px; padding-top: 5px; min-width: 0; min-height: 0; }
    .cmd { padding: 7px 1px 1px 5px; display: flex; flex-direction: column; }
    .ctabs { display: flex; border-left: 1px solid #363636; height: 27px; }
    .ctabs button { width: 32px; background: #393939; border: 1px solid #343434; border-radius: 4px 4px 0 0; }
    .ctabs .cur { width: 29px; background: #444; border-color: #393939; border-bottom: 0; }
    .cbody { flex: 1; border: 1px solid #383838; border-top: 0; padding: 5px 4px 4px 3px; display: flex; flex-direction: column; }
    .cats { display: flex; gap: 2px; height: 22px; padding-left: 1px; }
    .cats button { width: 20px; height: 20px; }
    .cats .on { background: #5b87c4; border-radius: 3px; }
    .cbody .drop { height: 20px; margin-top: 5px; background: #616161; flex: none; }
    .rolls { flex: 1; margin-top: 5px; padding-right: 2px; display: flex; flex-direction: column; gap: 4px; border-right: 6px solid #3a3a3a; }
    .roll { background: #505050; border: 1px solid #3c3c3c; border-radius: 2px; padding: 1px 15px 5px; }
    .roll h2 { margin: 0 -12px; height: 16px; font: 700 13px/16px "Noto Sans CJK SC", sans-serif; color: #fff; display: flex; align-items: center; gap: 4px; padding-left: 2px; }
    .roll h2::before { content: ""; border: 3px solid transparent; border-top: 5px solid #bbb; border-bottom: 0; margin-right: 3px; }
    .dots { margin: 0 4px 0 auto; width: 6px; height: 6px; background: radial-gradient(circle at 1px 1px, #888 1px, transparent 1px) 0 0 / 3px 3px; }
    .auto { display: flex; align-items: center; gap: 2px; color: #8a8a8a; padding-left: 32px; height: 22px; padding-top: 4px; }
    .auto input { appearance: none; width: 12px; height: 12px; background: #484848; border: 1px solid #434343; }
    .prims { display: grid; grid-template-columns: 1fr 1fr; gap: 4px; }
    .prims button, .kbtn { height: 17px; background: #646464; border: 1px solid #474747; border-radius: 3px; box-shadow: inset 0 1px #6e6e6e; line-height: 14px; }
    .nm { display: grid; grid-template-columns: 1fr 17px; gap: 3px; padding: 8px 4px 3px 5px; }
    .nm input { height: 20px; width: 100%; background: #5a5a5a; border: 1px solid #484848; }
    .nm button { background: #c82f80; border: 1px solid #111; }
    .ctx {
      position: absolute; left: 1090px; top: 26px; width: 237px; padding: 3px 0; margin: 0; border-radius: 8px; background: #f9f9f9; color: #111; z-index: 2;
      box-shadow: 0 4px 8px #0006; list-style: none;
    }
    .ctx li { padding: 4px 10px; height: 22px; }
    .ctx li.div { height: 9px; padding: 4px 9px 4px 40px; }
    .ctx hr { border: 0; height: 1px; background: #d6d6d6; margin: 0; }
    .ctx button { width: 100%; height: 14px; display: grid; grid-template-columns: 28px 1fr auto 14px; text-align: left; line-height: 14px; border-radius: 4px; align-items: center; }
    .ctx .on { background: #0078d7; color: #fff; }
    .ctx .off { color: #9c9c9c; }
    .slide { height: 26px; display: flex; align-items: center; padding-left: 10px; gap: 2px; font: 11px/14px var(--mono); }
    .slide button { height: 16px; width: 14px; background: #606060; border-radius: 2px; }
    .slide .pos { width: 123px; padding-right: 2px; }
    .track { height: 26px; display: flex; padding-left: 3px; }
    .track .grip { margin: -20px 2px 2px 0; }
    .mini { width: 47px; border-top: 1px solid #111; padding-left: 2px; }
    .mini button { width: 36px; height: 24px; }
    .ticks { flex: 1; display: flex; margin-right: 48px; background: linear-gradient(#262626, #2b2b2b); border-top: 1px solid #0c0c0c; font: 11px/14px var(--mono); color: #b8b8b8; }
    .tick { flex: 1 1 0; width: 0; display: flex; justify-content: center; background: linear-gradient(#777, #777) center top / 1px 12px no-repeat; padding-top: 10px; white-space: nowrap; }
    .tick.major { background-size: 1px 100%; }
    .tick.now { background: linear-gradient(#837a1c, #837a1c) center / 9px 24px no-repeat; color: #d8d070; }
    .status { height: 56px; display: flex; color: #f2f2f2; padding: 5px 8px 0 4px; }
    .mx { width: 97px; display: grid; gap: 1px; grid-template-rows: 22px 22px; font: 12px/16px var(--mono); color: #777; }
    .mx input { width: 100%; background: #fff; border: 2px solid #e8e8e8; border-top-color: #8a8a8a; border-left-color: #8a8a8a; padding: 0 4px; }
    .mx input.pink { background: #dcc3c3; }
    .bar2 { width: 3px; height: 51px; margin: -2px 4px 0 4px; background: #111; border-left: 1px solid #333; }
    .msgs { flex: 1; display: grid; grid-template-rows: 25px 25px; line-height: 26px; }
    .coords { width: 414px; display: grid; grid-template-rows: 24px 26px; }
    .crow { display: flex; align-items: center; font: 11px/16px var(--mono); }
    .crow button { width: 27px; }
    .crow label { width: 14px; margin-left: 14px; }
    .crow label.f { margin-left: 2px; }
    .crow input { width: 58px; height: 19px; background: #595959; border: 1px solid #3c3c3c; }
    .crow output { margin-left: 16px; white-space: nowrap; }
    .crow.b { justify-content: end; font: 12px/16px "Noto Sans CJK SC", sans-serif; }
    .crow .tagi { width: 21px; height: 20px; background: #5b87c4; border-radius: 2px; margin-right: 5px; }
    .plays { width: 123px; margin-left: 37px; display: grid; grid-template-rows: 24px 20px; }
    .prow { display: flex; align-items: center; }
    .prow button { width: 23px; height: 20px; }
    .prow .sep { margin: 0 1px; }
    .frame { width: 69px; height: 17px; display: grid; background: #636363; border: 1px solid #505050; align-items: center; }
    .frame input { grid-area: 1 / 1; width: 100%; padding-left: 4px; font: 11px/14px var(--mono); }
    .frame svg { grid-area: 1 / 1; justify-self: end; margin-right: 3px; }
    .keyb { width: 41px; height: 43px; margin: 1px 4px 0 10px; }
    .kgrid { width: 182px; display: grid; grid-template-columns: 66px 1fr; grid-template-rows: 20px 21px; gap: 2px 4px; padding-top: 1px; }
    .kgrid .kbtn { height: 100%; overflow: hidden; }
    .kgrid .drop { height: 19px; border: 1px solid #505050; }
    .kf { display: grid; grid-template-columns: 22px 1fr; gap: 4px; min-width: 0; }
    .nav { margin-left: 12px; display: grid; grid-template-columns: repeat(4, 24px); grid-template-rows: 22px 22px; padding-top: 1px; }
    .taskbar { height: 48px; display: grid; grid-template-columns: 1fr auto 1fr; align-items: center; color: #111; background: linear-gradient(90deg, #e2eef6 0, #e4eef7 18%, #d2e3fb 23%, #d7dbf2 29%, #d6e1fa 42%, #d6dcf4 60%, #d3e1fa 66%, #d8daeb 73%, #dfeaf7 82%, #e6f1fb 100%); }
    .tasks { display: flex; gap: 4px; }
    .tasks button { width: 40px; height: 40px; border-radius: 4px; flex-direction: column; gap: 3px; padding-top: 6px; }
    .tasks button::after { content: ""; height: 3px; width: 6px; border-radius: 2px; }
    .tasks .run::after { background: #7d828c; }
    .tasks .cur { background: #eef1f9; box-shadow: 0 0 0 1px #dfe3ef; }
    .tasks .cur::after { width: 16px; background: #0078d4; }
    .widget { margin-left: 16px; }
    .tray { display: flex; justify-content: end; align-items: center; padding-right: 19px; gap: 8px; }
    .tray .ime { font-size: 14px; margin: 0 7px 0 4px; }
    .tray time { font-size: 11px; line-height: 16px; text-align: right; margin-left: 8px; margin-right: 2px; }
    .badge { width: 18px; height: 18px; border-radius: 50%; background: #0078d4; color: #fff; display: grid; place-items: center; }
    .activate { position: absolute; left: 1630px; bottom: 96px; color: #a6a6a6; opacity: .85; font: 15px/22px "Noto Sans", "Noto Sans CJK SC", sans-serif; pointer-events: none; white-space: nowrap; z-index: 3; }
    .activate p { margin: 0; }
    .activate .big { font-size: 20px; line-height: 26px; }
    .mark { position: absolute; right: 5px; bottom: 12px; font: 36px/40px "Liberation Sans", sans-serif; color: #e0e3e6cc; text-shadow: 1px 1px 1px #777c; white-space: nowrap; pointer-events: none; z-index: 3; }
  `];

  private tool(t: string) {
    if (t === "|") return html`<span class="sep"></span>`;
    if (t[0] === "#") {
      const v = t.slice(1);
      return html`<span class=${classMap({ drop: true, wide: v.length > 2 })}><select aria-label=${v}><option>${v}</option></select></span>`;
    }
    const on = t[0] === "*";
    const n = on ? t.slice(1) : t;
    return html`<button class=${classMap({ tool: true, on })} aria-label=${n}>${icon(n, n === "override" || n === "ribbon" ? 25 : 23)}</button>`;
  }

  private ctxRow(r: MenuRow) {
    if (!r) return html`<li class="div"><hr></li>`;
    return html`<li><button class=${classMap({ on: !!r.on, off: !!r.off })} ?disabled=${!!r.off}>
      <span>${r.on ? html`<svg class="ic" width="14" height="12" viewBox="0 0 14 12" aria-hidden="true"><path d="M3 6l3 3 6-7" fill="none" stroke="#123" stroke-width="2"/></svg>` : nothing}</span>
      <span>${r.text}</span><span>${r.key ?? ""}</span>
      <span>${r.sub ? html`<svg class="ic" width="12" height="10" viewBox="0 0 12 10" aria-hidden="true"><path d="M5 1l4 4-4 4" fill="none" stroke="#333" stroke-width="1.300"/></svg>` : nothing}</span>
    </button></li>`;
  }

  render() {
    return html`
      <header class="title">
        <svg width="14" height="14" viewBox="0 0 24 24" aria-hidden="true"><path d="M0 0h24v24H0z" fill="#d8ecec"/><text x="5" y="18" font-size="22" font-weight="700" font-family="Liberation Sans" fill="#12888c">3</text></svg>
        <h1>无标题 - 3ds Max 2020</h1>
        <div class="wins">
          <button aria-label="最小化"><svg width="12" height="12"><path d="M1 6.500h10" stroke="#000"/></svg></button>
          <button aria-label="还原"><svg width="12" height="12"><path d="M1.500 3.500h7v7h-7zM3.500 3V1.500h7v7H9" fill="none" stroke="#000"/></svg></button>
          <button aria-label="关闭"><svg width="12" height="12"><path d="M1 1l10 10M11 1L1 11" stroke="#000"/></svg></button>
        </div>
      </header>
      <nav class="menubar">
        <div class="menus">${MENUS.map((m) => html`<button>${m}</button>`)}</div>
        <span class="drop login">
          <svg width="14" height="16" viewBox="0 0 14 16" aria-hidden="true"><ellipse cx="7" cy="5.500" rx="3.500" ry="4.500" fill="none" stroke="#000" stroke-width="1.300"/><path d="M1 15q0-4 4-4.500M13 15q0-4-4-4.500M0 14.500h14" fill="none" stroke="#000" stroke-width="1.300"/></svg>
          <select aria-label="登录"><option>登录</option></select>
        </span>
        <label class="wslabel" for="ws">工作区:</label>
        <span class="drop ws"><select id="ws"><option>默认</option></select></span>
      </nav>
      <div class="toolbar">
        <span class="grip"></span>
        ${TOOLS.map((t) => this.tool(t))}
        <span class="grip"></span>
        <span class="drop path"><select aria-label="项目路径"><option>C:\\Users\\test\\Documents\\3ds Max 2020</option></select></span>
        ${["pgear", "pfolder", "ptree", "pnodes"].map((n) => html`<button class="small" aria-label=${n}>${icon(n, 22)}</button>`)}
      </div>
      <div class="ribbon">
        <span class="grip"></span>
        <div>
          <div class="rtabs">
            <button class="cur">建模</button><button>自由形式</button><button class="gap">选择</button><button class="gap">对象绘制</button><button class="gap">填充</button>
            <button class="opts" aria-label="选项"><svg width="26" height="12" viewBox="0 0 26 12"><rect y="1" width="13" height="9" rx="2" fill="#e4e4e4"/><path d="M3.500 4h6l-3 4z" fill="#333"/><path d="M19 4.500h5l-2.500 4z" fill="#bbb"/></svg></button>
          </div>
          <div class="rpanel"><button>多边形建模</button></div>
        </div>
      </div>
      <main>
        <aside class="strip">
          <div class="hgrip"></div>
          <div class="dark">
            <button class="exp" aria-label="展开"><svg width="8" height="10"><path d="M1 0l5 5-5 5z" fill="#e0e0e0"/></svg></button>
            <button class="lay" aria-label="视口布局"><svg width="32" height="30" viewBox="0 0 32 30"><path d="M1 1h14v13H1zM17 1h14v13H17zM1 16h14v13H1zM17 16h14v13H17z" fill="#5e6a7c" stroke="#27334a" stroke-width="1.600"/></svg></button>
          </div>
        </aside>
        <section class="explorer">
          <div class="hgrip"></div>
          <div class="emenu">${["选择", "显示", "编辑", "自定义"].map((m) => html`<button>${m}</button>`)}</div>
          <div class="esearch">
            <input aria-label="查找"><button class="x" aria-label="清除">${icon("xmark", 13)}</button>
            <button class="hot" aria-label="过滤">${icon("funnelArrow", 17)}</button><span class="vsep"></span>
            <button class="i" aria-label="锁定">${icon("lock", 16)}</button><button class="i" aria-label="层次">${icon("tree1", 16)}</button><button class="i" aria-label="分层">${icon("tree2", 16)}</button>
          </div>
          <div class="ebody">
            <div class="side">
              ${SIDE.map((n) => html`<button class="on" aria-label=${n}>${icon(n, 17)}</button>`)}
              <hr>${["doc", "blank", "docd"].map((n) => html`<button aria-label=${n}>${icon(n, 16)}</button>`)}
              <hr>${["funnelGear", "funnel", "brick"].map((n) => html`<button aria-label=${n}>${icon(n, 16)}</button>`)}
            </div>
            <div class="list"><table><thead><tr><th>名称(按升序排序)<span>▲</span></th><th class="fz">冻结</th></tr></thead></table></div>
          </div>
          <div class="efoot">
            <span class="drop"><select aria-label="资源管理器"><option>默认</option></select></span>
            <span class="vsep"></span><button class="i" aria-label="图层">${icon("stack", 17)}</button><button class="hot" aria-label="层级">${icon("hier", 17)}</button><span class="vsep"></span>
            <span class="txt">选择集:</span><span class="chev">»</span>
          </div>
        </section>
        <section class="views">
          <max-viewport kind="ortho" view="正交"></max-viewport>
          <max-viewport kind="front" view="前"></max-viewport>
          <max-viewport kind="left" view="左"></max-viewport>
          <max-viewport kind="persp" view="透视"></max-viewport>
        </section>
        <aside class="cmd">
          <div class="hgrip"></div>
          <div class="ctabs">
            ${["plus", "modify", "hierTab", "motion", "display", "wrench"].map((n, i) => html`<button class=${classMap({ cur: i === 0 })} aria-label=${n}>${icon(n, 17)}</button>`)}
          </div>
          <div class="cbody">
            <div class="cats">${["sphere", "shapes", "bulb", "camera", "helper", "waves", "gears"].map((n, i) => html`<button class=${classMap({ on: i === 0 })} aria-label=${n}>${icon(n, i === 0 ? 18 : 15)}</button>`)}</div>
            <span class="drop"><select aria-label="类别"><option>标准基本体</option></select></span>
            <div class="rolls">
              <section class="roll">
                <h2>对象类型<span class="dots"></span></h2>
                <label class="auto"><input type="checkbox" disabled>自动栅格</label>
                <div class="prims">${PRIMS.map((p) => html`<button>${p}</button>`)}</div>
              </section>
              <section class="roll">
                <h2>名称和颜色<span class="dots"></span></h2>
                <div class="nm"><input aria-label="名称"><button aria-label="颜色"></button></div>
              </section>
            </div>
          </div>
        </aside>
        <ul class="ctx">${CONTEXT.map((r) => this.ctxRow(r))}</ul>
      </main>
      <div class="slide"><button aria-label="上一帧">&lt;</button><button class="pos">0 / 100</button><button aria-label="下一帧">&gt;</button></div>
      <div class="track">
        <span class="grip"></span>
        <div class="mini"><button aria-label="迷你曲线编辑器">${icon("trackIcon", 14)}</button></div>
        <div class="ticks">${Array.from({ length: 101 }, (_, i) => html`<span class=${classMap({ tick: true, major: i % 5 === 0, now: i === 0 })}>${i % 5 === 0 ? i : nothing}</span>`)}</div>
      </div>
      <div class="status">
        <div class="mx"><input class="pink" aria-label="宏录制器"><input aria-label="MAXScript" value="MAXScript 迷你侦听器"></div>
        <span class="bar2"></span>
        <div class="msgs"><span>未选定任何对象</span><span>单击或单击并拖动以选择对象</span></div>
        <div class="coords">
          <div class="crow">
            <button aria-label="孤立">${icon("isolate", 17)}</button><button aria-label="锁定选择">${icon("lockDim", 17)}</button><button aria-label="绝对模式">${icon("absolute", 16)}</button>
            <label class="f" for="cx">X:</label><input id="cx"><label for="cy">Y:</label><input id="cy"><label for="cz">Z:</label><input id="cz">
            <output>栅格 = 10.0</output>
          </div>
          <div class="crow b"><button class="tagi" aria-label="标记">${icon("cube", 17)}</button><span>添加时间标记</span></div>
        </div>
        <div class="plays">
          <div class="prow"><button aria-label="开头">${icon("first", 16)}</button><span class="sep"></span><button aria-label="上一关键">${icon("prev", 15)}</button><button aria-label="播放">${icon("play", 17)}</button><button aria-label="下一关键">${icon("next", 15)}</button><span class="sep"></span><button aria-label="结尾">${icon("last", 16)}</button></div>
          <div class="prow"><button aria-label="关键点模式">${icon("keys", 15)}</button><span class="sep"></span>
            <span class="frame"><input aria-label="当前帧" value="0"><svg width="5" height="10" aria-hidden="true"><path d="M0 4l2.500-4L5 4zM0 6h5l-2.500 4z" fill="#ddd"/></svg></span>
            <span class="sep"></span><button aria-label="时间配置">${icon("clock", 16)}</button></div>
        </div>
        <button class="kbtn keyb" aria-label="设置关键点模式">${icon("bigKey", 30)}</button>
        <div class="kgrid">
          <button class="kbtn">自动关键点</button><span class="drop"><select aria-label="选择集合"><option>选定对象</option></select></span>
          <button class="kbtn">设置关键点</button>
          <div class="kf"><button aria-label="切线">${icon("tangent", 18)}</button><button class="kbtn">关键点过滤器...</button></div>
        </div>
        <div class="nav">${["zoom", "zoomAll", "extents", "extentsAll", "region", "hand", "orbit", "maximize"].map((n) => html`<button aria-label=${n}>${icon(n, 16)}</button>`)}</div>
      </div>
      <footer class="taskbar">
        <div><button class="widget" aria-label="小组件"><svg width="24" height="22" viewBox="0 0 24 22"><rect width="24" height="22" rx="1" fill="#0f62b4"/><path d="M2 2h9v18H2z" fill="#f2f2f2"/><path d="M13 2h9v10h-9z" fill="#5fd0ff"/><path d="M13 12h9v4h-9z" fill="#2aa2f2"/><path d="M13 16h9v4h-9z" fill="#0a7be0"/></svg></button></div>
        <div class="tasks">${TASKS.map(([n, art, c]) => html`<button class=${c} aria-label=${n}><svg width="24" height="24" viewBox="0 0 24 24">${art}</svg></button>`)}</div>
        <div class="tray">
          <svg width="12" height="8" aria-hidden="true"><path d="M1 7l5-5 5 5" fill="none" stroke="#222" stroke-width="1.500"/></svg>
          <svg width="18" height="16" viewBox="0 0 18 16" aria-hidden="true"><path d="M1 2l5 11 3-5-2-6z" fill="#e33"/><path d="M9 3l7-2-5 8-3-1z" fill="#f05030"/><path d="M8 12q5-5 9 0l-1 4H9z" fill="#2a86e8"/></svg>
          <span class="ime">英</span>
          <svg width="18" height="14" viewBox="0 0 18 14" aria-hidden="true"><path d="M1 5q8-7 16 0M4 8q5-4 10 0M6.500 10.500q2.500-2 5 0" fill="none" stroke="#222" stroke-width="1.500"/><circle cx="9" cy="12.500" r="1.300" fill="#222"/></svg>
          <svg width="16" height="14" viewBox="0 0 16 14" aria-hidden="true"><path d="M1 5h2l4-4v12L3 9H1zM10 4q2 3 0 6M12 2q4 5 0 10" fill="none" stroke="#222" stroke-width="1.300"/></svg>
          <time>10:33<br>2025/3/21</time><span class="badge">1</span>
        </div>
      </footer>
      <div class="activate"><p class="big">激活 Windows</p><p>转到“设置”以激活 Windows。</p></div>
      <div class="mark">CSDN @XZ-070001</div>`;
  }
}
